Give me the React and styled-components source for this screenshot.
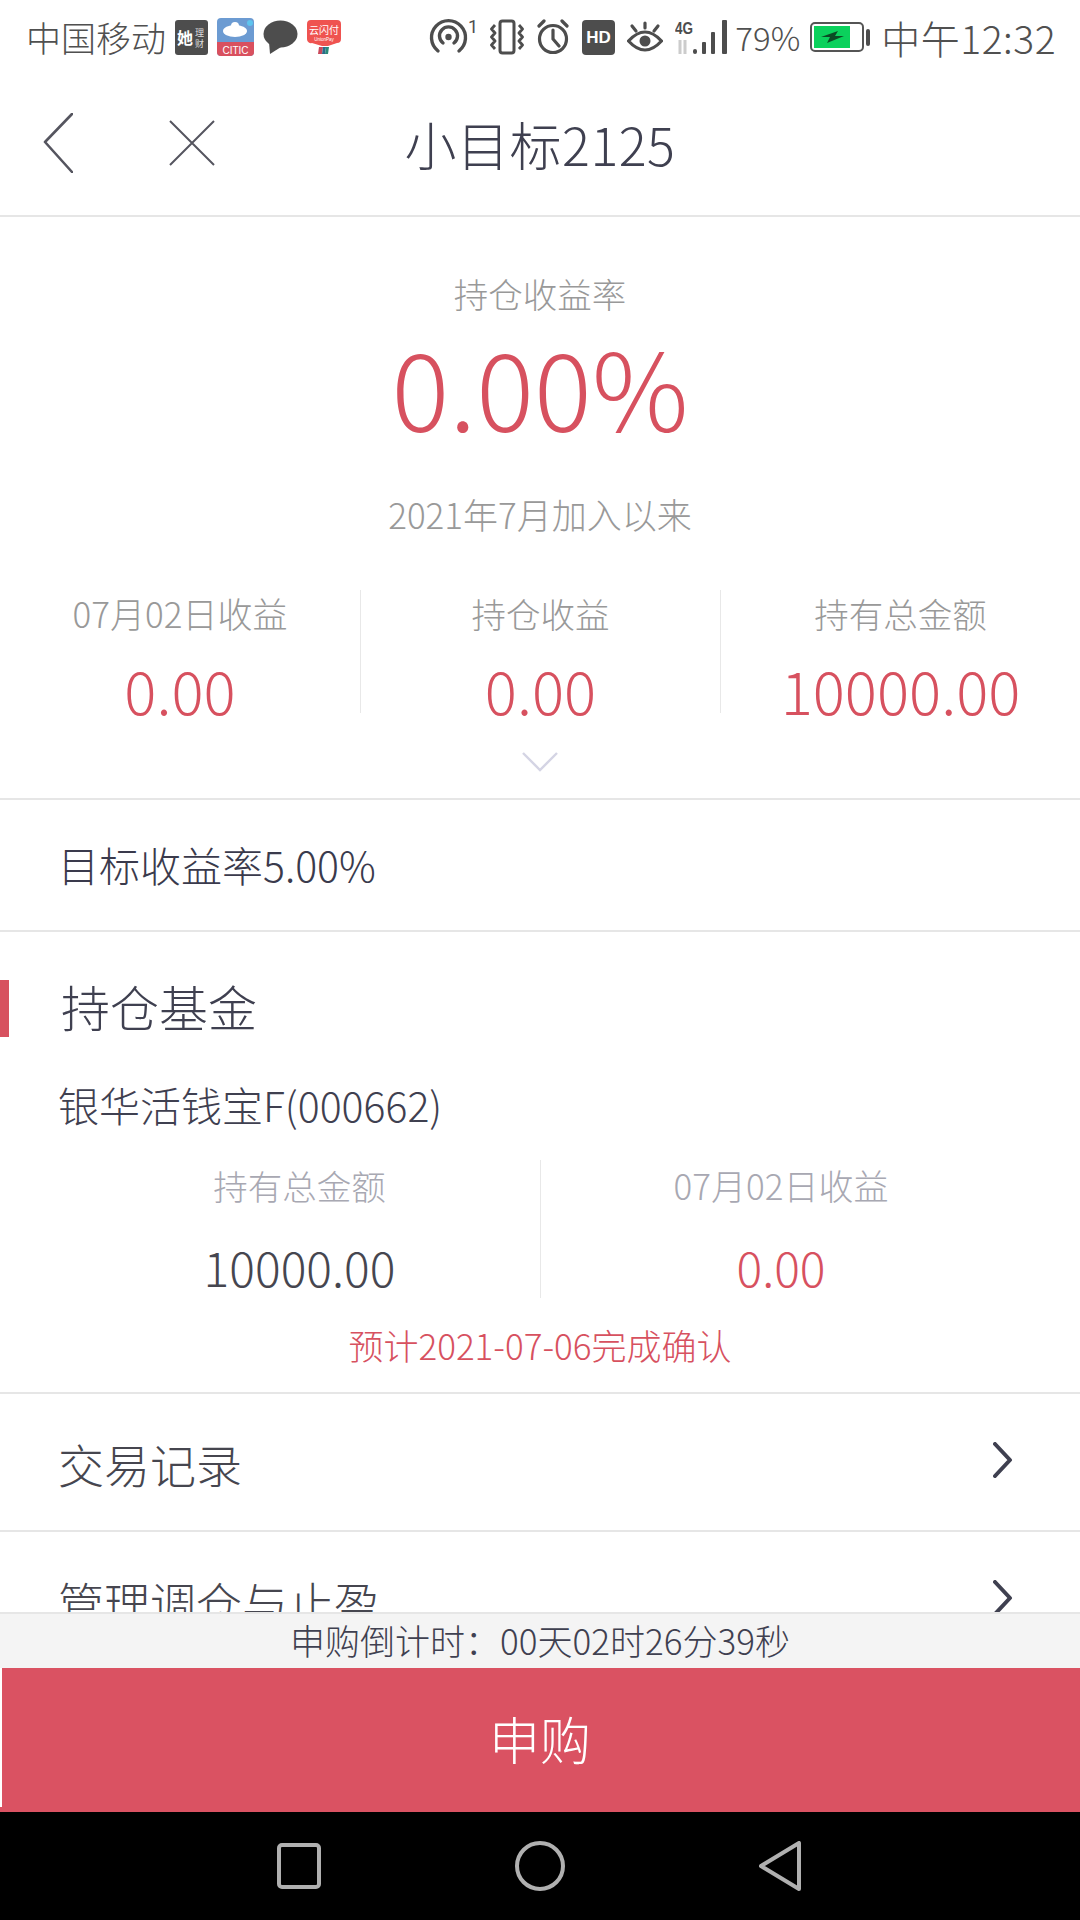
import React from 'react';
import styled, { createGlobalStyle } from 'styled-components';

const Global = createGlobalStyle`
  html, body { margin: 0; padding: 0; background: #fff; }
  * { box-sizing: border-box; }
  body { font-family: "Noto Sans CJK SC", "Noto Sans", sans-serif; }
`;
const RED = '#d7515f';
const Phone = styled.div`width:1080px;height:1920px;display:flex;flex-direction:column;overflow:hidden;background:#fff;`;
const StatusBar = styled.div`height:72px;flex:none;display:flex;justify-content:space-between;align-items:center;padding:2px 24px 0 26px;color:#505050;`;
const StatusGroup = styled.div`display:flex;align-items:center;gap:${p => p.$gap || 8}px;`;
const StatusText = styled.span`font-size:${p => p.$size || 35}px;line-height:40px;font-weight:300;white-space:nowrap;letter-spacing:${p => p.$ls || 0}px;margin:${p => p.$m || 0};`;
const Header = styled.header`height:145px;flex:none;display:flex;align-items:center;position:relative;border-bottom:2px solid #e6e6e6;padding:0 0 2px 43px;`;
const HeaderIcons = styled.div`display:flex;align-items:center;gap:96px;`;
const Title = styled.h1`position:absolute;left:0;right:0;top:44px;margin:0;text-align:center;font-size:52px;line-height:56px;letter-spacing:.5px;font-weight:300;color:#3f4050;`;
const Scroll = styled.div`flex:1;min-height:0;overflow:hidden;`;
const Summary = styled.section`height:583px;border-bottom:2px solid #e6e6e6;display:flex;flex-direction:column;align-items:center;padding-top:53px;`;
const Caption = styled.div`font-size:${p => p.$size || 34.5}px;line-height:46px;font-weight:300;color:${p => p.$c || '#999'};margin-top:${p => p.$mt || 0}px;`;
const Rate = styled.div`font-size:108px;line-height:130px;font-weight:300;color:${RED};margin-top:4px;`;
const StatRow = styled.div`display:grid;grid-template-columns:repeat(${p => p.$cols},1fr);width:100%;margin-top:${p => p.$mt}px;padding:0 ${p => p.$px || 0}px;`;
const Stat = styled.div`height:${p => p.$h}px;padding-top:${p => p.$pt || 0}px;display:flex;flex-direction:column;align-items:center;border-left:${p => p.$first ? '0' : '1px solid #e8e8e8'};`;
const StatValue = styled.div`font-size:${p => p.$size}px;line-height:${p => p.$lh}px;font-weight:300;color:${p => p.$c};margin-top:${p => p.$mt}px;`;
const ExpandIcon = styled.svg`display:block;margin-top:39px;`;
const TargetRow = styled.section`height:132px;border-bottom:2px solid #e6e6e6;display:flex;align-items:center;padding:0 0 2px 58px;font-size:41px;font-weight:300;color:#3a3a4c;`;
const Fund = styled.section`height:462px;border-bottom:2px solid #e6e6e6;display:flex;flex-direction:column;`;
const SectionTitle = styled.h2`margin:48px 0 0;height:57px;border-left:9px solid ${RED};padding-left:52px;font-size:49px;line-height:52px;font-weight:300;color:#3f4050;`;
const FundName = styled.div`margin-top:40px;padding-left:58px;font-size:41px;line-height:54px;font-weight:300;color:#3f4050;`;
const Notice = styled.div`margin-top:24px;text-align:center;font-size:35px;line-height:46px;font-weight:300;color:${RED};`;
const NavRow = styled.div`height:${p => p.$h}px;${p => p.$b ? 'border-bottom:2px solid #e6e6e6;' : ''}display:flex;justify-content:space-between;align-items:flex-start;padding:${p => p.$pt}px 67px 0 58px;font-size:46px;line-height:62px;font-weight:300;color:#46464f;`;
const Chevron = styled.svg`display:block;margin-top:${p => p.$mt}px;`;
const Countdown = styled.div`height:56px;flex:none;background:#f4f4f4;border-top:2px solid #e6e6e6;display:flex;align-items:center;justify-content:center;padding-bottom:4px;font-size:35px;font-weight:300;color:#3f4050;`;
const Buy = styled.button`height:144px;flex:none;width:100%;border:0;position:relative;background:#da5262;color:#fff;font:300 51px "Noto Sans CJK SC",sans-serif;padding:0 0 4px;
  &::before{content:"";position:absolute;left:0;top:0;width:2px;height:139px;background:#fff;}
`;
const NavBar = styled.nav`height:108px;flex:none;background:#000;display:flex;justify-content:center;align-items:center;gap:194px;padding-right:2px;`;

const Back = () => <svg width="30" height="60" viewBox="0 0 30 60" fill="none" stroke="#55555f" strokeWidth="2.6" strokeLinecap="round" strokeLinejoin="round"><path d="M29 1 2 29l27 30" /></svg>;
const Close = () => <svg width="46" height="46" viewBox="0 0 46 46" fill="none" stroke="#55555f" strokeWidth="2"><path d="M1 1l44 44M45 1 1 45" /></svg>;
const Right = ({ mt }) => <Chevron $mt={mt} width="20" height="36" viewBox="0 0 20 36" fill="none" stroke="#3f4050" strokeWidth="4" strokeLinecap="round" strokeLinejoin="round"><path d="M2 2l15 16L2 34" /></Chevron>;

const Her = () => <svg width="33" height="35" viewBox="0 0 33 35"><rect width="33" height="35" rx="3" fill="#4d4d4d" /><text x="2" y="24" fontSize="16" fill="#fff" fontFamily="Noto Sans CJK SC" fontWeight="700">她</text><text x="20" y="16" fontSize="9" fill="#ddd" fontFamily="Noto Sans CJK SC">理</text><text x="20" y="27" fontSize="9" fill="#ddd" fontFamily="Noto Sans CJK SC">财</text></svg>;
const Citic = () => <svg width="37" height="38" viewBox="0 0 37 38"><rect width="37" height="38" rx="4" fill="#6c9bd2" /><path d="M0 24h37v10a4 4 0 0 1-4 4H4a4 4 0 0 1-4-4z" fill="#d9505e" /><ellipse cx="18" cy="13" rx="12" ry="6" fill="#fff" /><circle cx="18" cy="8" r="4" fill="#fff" /><circle cx="33" cy="5" r="3" fill="#5ec4ee" /><text x="18.5" y="36" textAnchor="middle" fontSize="10" fill="#fff" fontFamily="Liberation Sans">CITIC</text></svg>;
const Bubble = () => <svg width="35" height="34" viewBox="0 0 35 34"><ellipse cx="17.5" cy="14" rx="17" ry="13.5" fill="#4d4d4d" /><path d="M6 22l1 12 11-7z" fill="#4d4d4d" /></svg>;
const Union = () => <svg width="34" height="35" viewBox="0 0 34 35"><path d="M4 0h26a4 4 0 0 1 4 4v15a4 4 0 0 1-4 4l-9 3h-6l-10-3a4 4 0 0 1-5-4V4a4 4 0 0 1 4-4z" fill="#ef5350" /><text x="17" y="14" textAnchor="middle" fontSize="10" fill="#fff" fontFamily="Noto Sans CJK SC">云闪付</text><text x="17" y="21" textAnchor="middle" fontSize="4.5" fill="#fff" fontFamily="Liberation Sans">UnionPay</text><path d="M12 27h4l-1 7h-4z" fill="#c9485a" /><path d="M16 27h3l-1 7h-3z" fill="#2b6a8a" /><path d="M19 27h3l-1 7h-3z" fill="#2a8a7a" /></svg>;
const Hotspot = () => <svg width="48" height="36" viewBox="0 0 48 36" overflow="visible" fill="none" stroke="#4d4d4d" strokeWidth="3.4" strokeLinecap="round"><path d="M8 32a17 17 0 1 1 21 0" /><path d="M13 24a9 9 0 1 1 11 0" /><circle cx="18.5" cy="18" r="3.2" fill="#4d4d4d" stroke="none" /><text x="38" y="14" fontSize="18" fill="#4d4d4d" stroke="none" fontFamily="Roboto">1</text></svg>;
const Vibrate = () => <svg width="34" height="36" viewBox="0 0 34 36" fill="none" stroke="#4d4d4d" strokeWidth="3" strokeLinejoin="round"><rect x="10" y="2" width="14" height="32" rx="2.5" /><path d="M5 6 1.5 10 5 14 1.5 18 5 22 1.5 26 5 30M29 6l3.5 4L29 14l3.5 4L29 22l3.5 4L29 30" strokeWidth="2.8" /></svg>;
const Alarm = () => <svg width="34" height="36" viewBox="0 0 34 36" fill="none" stroke="#4d4d4d" strokeWidth="3.2" strokeLinecap="round"><circle cx="17" cy="20" r="13.5" /><path d="M17 11v9l6 7M3 7l5-5M31 7l-5-5" /></svg>;
const Hd = () => <svg width="33" height="35" viewBox="0 0 33 35"><rect width="33" height="35" rx="4" fill="#4d4d4d" /><text x="16.5" y="23" textAnchor="middle" fontSize="17" fontWeight="700" fill="#fff" fontFamily="Liberation Sans">HD</text></svg>;
const Eye = () => <svg width="36" height="32" viewBox="0 0 36 32" fill="none" stroke="#4d4d4d" strokeWidth="3.2" strokeLinecap="round"><path d="M1.5 20Q18 2 34.5 20Q18 38 1.5 20z" /><circle cx="18" cy="20" r="5.5" fill="#4d4d4d" stroke="none" /><path d="M18 2v5M5 5l4 5M31 5l-4 5" /></svg>;
const Signal = () => <svg width="54" height="35" viewBox="0 0 54 35"><text x="0" y="14" fontSize="16" fontWeight="700" fill="#4d4d4d" fontFamily="Liberation Sans" textLength="18" lengthAdjust="spacingAndGlyphs">4G</text><path d="M5 20v14M10 20v14" stroke="#ccc" strokeWidth="3" /><rect x="18" y="29" width="4" height="5" rx="2" fill="#4d4d4d" /><rect x="27" y="22" width="4" height="12" rx="1" fill="#4d4d4d" /><rect x="36" y="12" width="4" height="22" rx="1" fill="#4d4d4d" /><rect x="47" y="0" width="5" height="34" rx="1" fill="#4d4d4d" /></svg>;
const Battery = () => <svg width="60" height="30" viewBox="0 0 60 30"><rect x="1" y="1" width="52" height="28" rx="4" fill="#fff" stroke="#555" strokeWidth="2" /><rect x="4" y="4" width="36" height="22" fill="#0bd15c" /><path d="M11 15l17-6-3 5h9l-17 7 3-6z" fill="#0b4a24" /><rect x="56" y="7" width="4" height="17" rx="2" fill="#4d4d4d" /></svg>;

const App = () => (
  <Phone>
    <Global />
    <StatusBar>
      <StatusGroup $gap={9}>
        <StatusText>中国移动</StatusText><Her /><Citic /><Bubble /><Union />
      </StatusGroup>
      <StatusGroup $gap={12}>
        <Hotspot /><Vibrate /><Alarm /><Hd /><Eye /><Signal />
        <StatusText $size={33} $m="0 -2px 0 -6px">79%</StatusText><Battery />
        <StatusText $size={39} $ls={0.5} $m="0 0 0 -1px">中午12:32</StatusText>
      </StatusGroup>
    </StatusBar>
    <Header>
      <HeaderIcons><Back /><Close /></HeaderIcons>
      <Title>小目标2125</Title>
    </Header>
    <Scroll>
      <Summary>
        <Caption>持仓收益率</Caption>
        <Rate>0.00%</Rate>
        <Caption $mt={41} $size={35}>2021年7月加入以来</Caption>
        <StatRow $cols={3} $mt={53}>
          <Stat $first $h={123}><Caption $size={35}>07月02日收益</Caption><StatValue $size={60} $lh={48} $mt={29} $c={RED}>0.00</StatValue></Stat>
          <Stat $h={123}><Caption>持仓收益</Caption><StatValue $size={60} $lh={48} $mt={29} $c={RED}>0.00</StatValue></Stat>
          <Stat $h={123}><Caption>持有总金额</Caption><StatValue $size={60} $lh={48} $mt={29} $c={RED}>10000.00</StatValue></Stat>
        </StatRow>
        <ExpandIcon width="36" height="20" viewBox="0 0 36 20" fill="none" stroke="#d4d4e4" strokeWidth="2.4"><path d="M1 1l17 17L35 1" /></ExpandIcon>
      </Summary>
      <TargetRow>目标收益率5.00%</TargetRow>
      <Fund>
        <SectionTitle>持仓基金</SectionTitle>
        <FundName>银华活钱宝F(000662)</FundName>
        <StatRow $cols={2} $mt={29} $px={59}>
          <Stat $first $h={138} $pt={2}><Caption $c="#a8a8b2">持有总金额</Caption><StatValue $size={48} $lh={60} $mt={28} $c="#46464f">10000.00</StatValue></Stat>
          <Stat $h={138} $pt={2}><Caption $c="#a8a8b2" $size={35}>07月02日收益</Caption><StatValue $size={48} $lh={60} $mt={28} $c={RED}>0.00</StatValue></Stat>
        </StatRow>
        <Notice>预计2021-07-06完成确认</Notice>
      </Fund>
      <NavRow $h={138} $b $pt={38}>交易记录<Right mt={10} /></NavRow>
      <NavRow $h={120} $pt={38}>管理调仓与止盈<Right mt={10} /></NavRow>
    </Scroll>
    <Countdown>申购倒计时：00天02时26分39秒</Countdown>
    <Buy>申购</Buy>
    <NavBar>
      <svg width="44" height="46" viewBox="0 0 44 46" fill="none" stroke="#b0b0b0" strokeWidth="4"><rect x="2" y="2" width="40" height="42" rx="3" /></svg>
      <svg width="50" height="50" viewBox="0 0 50 50" fill="none" stroke="#b0b0b0" strokeWidth="4"><circle cx="25" cy="25" r="23" /></svg>
      <svg width="42" height="50" viewBox="0 0 42 50" fill="none" stroke="#b0b0b0" strokeWidth="4" strokeLinejoin="round"><path d="M40 2v46L2 25z" /></svg>
    </NavBar>
  </Phone>
);
export default App;
